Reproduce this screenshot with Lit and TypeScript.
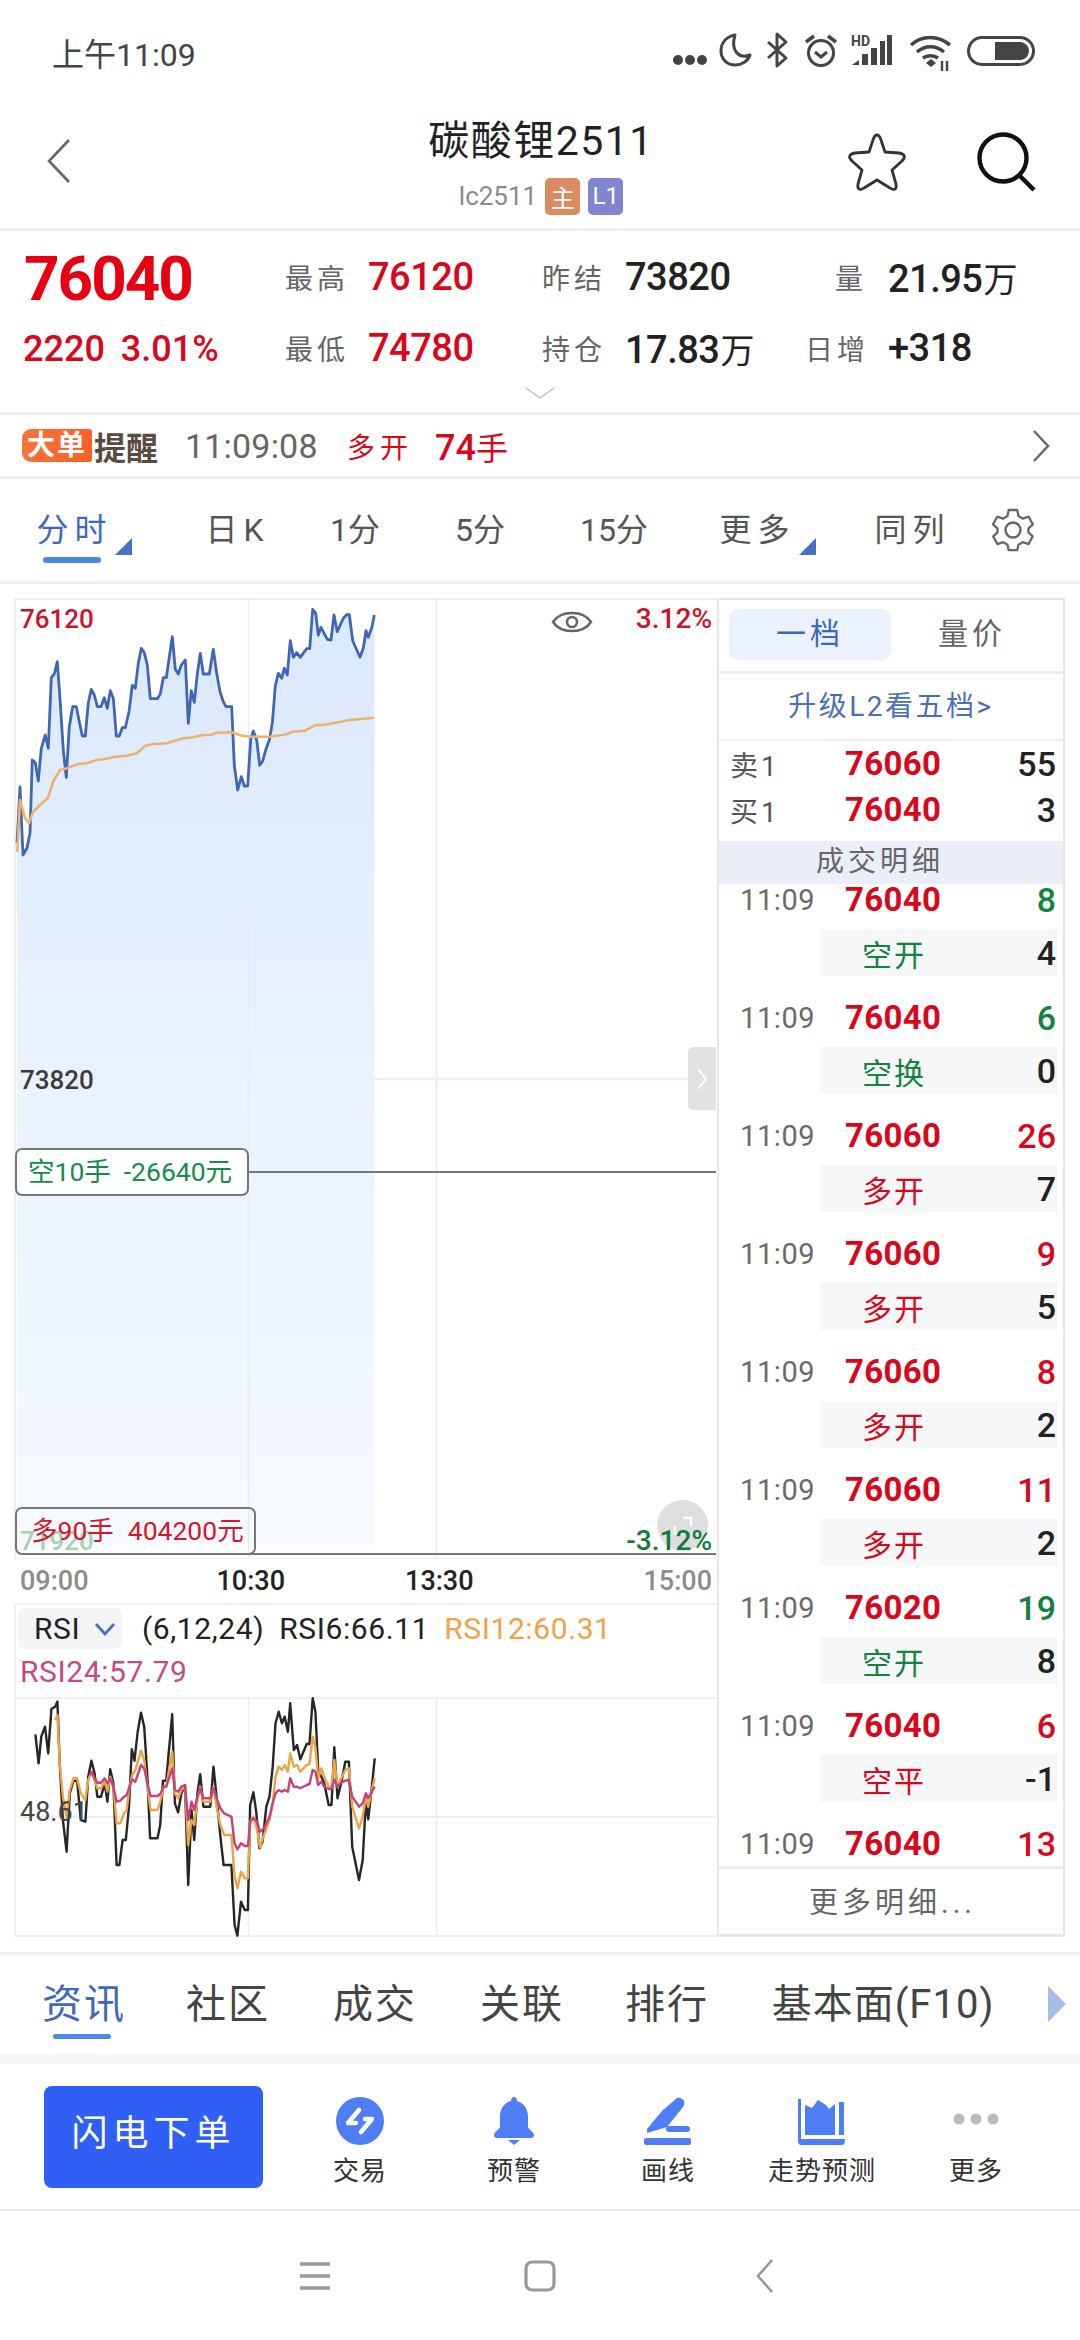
import { LitElement, html, css, svg } from "lit";
import { customElement } from "lit/decorators.js";

type P = [number, number];
const pts = (a: number[]): P[] => { const r: P[] = []; for (let i = 0; i < a.length; i += 2) r.push([a[i], a[i + 1]]); return r; };
// price curves: traced in 3x crop coordinates (origin 0,580)
const toMain = (p: P[]) => p.map(([x, y]) => `${(x / 3).toFixed(1)},${(580 + y / 3).toFixed(1)}`).join(" ");
// rsi curves: traced with x*2.178, y*3 (origin 0,1590)
const toRsi = (p: P[]) => p.map(([x, y]) => `${(x / 2.178).toFixed(1)},${(1590 + y / 3).toFixed(1)}`).join(" ");

const BLUE = pts([51,789,60,621,69,825,81,804,90,759,97,540,106,548,115,603,124,505,136,465,145,505,154,293,163,282,172,245,181,370,190,510,199,592,208,440,218,380,229,380,238,425,247,468,256,468,265,368,274,328,283,345,292,380,303,380,313,353,322,385,331,332,340,355,349,468,358,468,367,443,376,443,387,395,397,316,406,325,415,250,424,205,433,218,442,255,451,356,472,356,481,342,490,293,499,293,517,170,526,268,535,282,544,255,556,240,565,430,574,332,583,367,592,282,601,220,610,282,628,282,640,208,650,280,660,335,670,365,678,380,695,380,703,555,713,630,724,590,733,618,743,618,752,478,760,453,770,480,779,556,788,543,797,510,808,480,817,430,826,318,835,280,845,295,853,265,862,285,871,182,880,232,890,218,901,232,920,206,929,206,938,88,947,100,955,165,963,142,982,178,993,180,1002,105,1012,155,1030,115,1040,104,1048,104,1058,182,1080,232,1090,205,1098,152,1105,172,1116,140,1123,105]);
const AVG = pts([52,816,60,660,75,714,87,729,99,696,120,675,144,654,159,606,180,570,200,565,235,552,260,550,290,540,320,536,345,530,380,527,410,520,435,498,455,493,500,490,550,475,580,472,610,465,635,464,650,458,695,457,720,466,750,470,810,470,860,463,875,456,915,452,945,436,975,434,1050,420,1123,413]);
const R6 = pts([77,433,84,520,90,440,98,410,105,490,112,357,120,350,125,335,130,520,137,690,145,785,152,610,160,572,168,572,176,690,186,695,192,560,199,512,206,550,212,620,220,620,228,580,234,635,240,538,247,580,254,825,260,825,267,750,274,750,281,650,287,478,293,512,300,425,307,368,314,410,321,560,327,745,343,745,349,705,355,572,362,572,375,373,381,640,388,667,395,610,403,585,410,885,417,660,423,750,430,610,436,553,443,650,458,650,465,530,473,640,480,740,487,825,504,825,511,1005,517,1037,525,935,533,960,540,960,545,645,552,607,558,665,565,775,572,755,580,650,587,620,594,530,600,400,607,365,614,400,620,380,627,425,632,340,640,480,647,465,654,508,668,462,674,462,681,325,687,365,693,540,700,560,706,580,716,645,722,645,728,472,735,625,743,580,752,515,760,515,767,770,782,870,790,810,797,630,802,688,810,590,816,505]);
const R12 = pts([120,390,125,375,130,520,137,620,145,680,152,600,160,565,168,565,176,610,186,630,192,570,199,548,206,570,212,595,220,595,228,575,234,605,240,560,247,590,254,700,262,700,270,670,276,660,282,590,288,555,295,540,307,482,314,510,321,590,328,660,343,660,350,630,356,590,362,590,375,485,381,610,388,625,395,600,403,590,410,765,417,690,423,705,430,630,436,590,443,635,458,635,465,590,473,660,480,705,488,735,504,735,511,860,517,895,525,845,533,865,540,865,545,695,552,680,560,720,566,772,575,735,587,690,594,640,600,560,607,530,614,540,620,525,627,545,632,490,640,530,647,525,654,545,668,525,674,522,681,440,687,470,693,565,700,535,706,560,716,590,722,590,728,510,735,590,743,565,752,540,760,535,767,650,782,715,790,680,797,620,802,650,810,600,816,565]);
const R24 = pts([195,555,200,545,206,565,212,578,220,578,228,565,234,580,240,565,247,590,254,635,262,632,270,620,276,615,282,590,288,568,295,575,307,525,314,535,321,580,328,618,343,618,350,610,356,590,362,590,375,535,381,600,388,605,395,590,403,585,410,690,417,635,423,660,430,620,436,595,443,625,458,625,465,595,473,630,480,655,488,670,504,680,511,760,517,778,525,760,533,768,540,768,545,695,552,685,560,695,566,725,575,715,587,680,594,640,600,610,607,600,614,605,620,600,627,605,632,565,640,590,647,590,654,595,668,585,674,582,681,540,687,545,693,585,700,575,706,590,716,597,722,597,728,570,735,590,743,578,752,572,760,570,767,620,782,650,790,640,797,610,802,625,810,605,816,590]);

type Row = { price: string; qty: string; qc: string; kind?: string; kc?: string; sub?: string };
const ROWS: Row[] = [
  { price: "76040", qty: "8", qc: "g", kind: "空开", kc: "g", sub: "4" },
  { price: "76040", qty: "6", qc: "g", kind: "空换", kc: "g", sub: "0" },
  { price: "76060", qty: "26", qc: "r", kind: "多开", kc: "r", sub: "7" },
  { price: "76060", qty: "9", qc: "r", kind: "多开", kc: "r", sub: "5" },
  { price: "76060", qty: "8", qc: "r", kind: "多开", kc: "r", sub: "2" },
  { price: "76060", qty: "11", qc: "r", kind: "多开", kc: "r", sub: "2" },
  { price: "76020", qty: "19", qc: "g", kind: "空开", kc: "g", sub: "8" },
  { price: "76040", qty: "6", qc: "r", kind: "空平", kc: "r", sub: "-1" },
  { price: "76040", qty: "13", qc: "r" },
];

@customElement("app-root")
export class AppRoot extends LitElement {
  static styles = css`
    :host { display: block; width: 1080px; height: 2340px; background: #fff; overflow: hidden; color: #222;
      font-family: Roboto, "Noto Sans CJK SC", sans-serif; }
    * { box-sizing: border-box; }
    svg { display: block; }
    .r { color: #d9071c; } .g { color: #12823e; }

    .status { height: 104px; display: flex; align-items: center; justify-content: space-between; padding: 0 45px 0 52px; }
    .clock { font-size: 32px; color: #444; }
    .sicons { display: flex; align-items: center; height: 104px; }
    .s1 { margin-top: 16px; }
    .s2 { margin: -4px 0 0 11px; }
    .s3 { margin: -4px 0 0 14px; }
    .s4 { margin: -2px 0 0 16px; }
    .s5 { margin: -4px 0 0 13px; }
    .s6 { margin: 2px 0 0 16px; }
    .s7 { margin: -2px 0 0 14px; }

    .head { height: 127px; border-bottom: 3px solid #eee; display: flex; align-items: flex-start; padding: 0 44px 0 46px; }
    .head .side { flex: 1; display: flex; gap: 69px; }
    .head .back { padding-top: 34px; }
    .head .right { justify-content: flex-end; padding-top: 28px; }
    .title { display: flex; flex-direction: column; align-items: center; padding-top: 9px; }
    .title h1 { margin: 0; font-size: 41px; font-weight: 400; line-height: 56px; letter-spacing: 1.5px; color: #222; }
    .subt { display: flex; align-items: center; gap: 8px; font-size: 26px; color: #8a8a8a; height: 38px; margin-top: 8px; }
    .bdg { width: 35px; height: 37px; border-radius: 5px; color: #fff; font-size: 24px; display: flex; align-items: center; justify-content: center; }
    .bdg.a { background: #dc8a60; } .bdg.b { background: #7f86cf; }

    .quote { border-bottom: 3px solid #eee; height: 184px; padding: 23px 0 0 24px; display: flex; position: relative; }
    .big { width: 261px; }
    .big .p { font-size: 62px; font-weight: 700; letter-spacing: -2px; line-height: 50px; height: 54px; color: #e60012; }
    .big .c { font-size: 36px; font-weight: 500; color: #d9071c; margin: 19px 0 0 -1px; display: flex; gap: 16px; line-height: 44px; }
    .stats { flex: 1; display: grid; grid-template-columns: 257px 263px 1fr; grid-auto-rows: 46px; row-gap: 25px; }
    .stat { display: flex; align-items: center; gap: 21px; }
    .stat label { font-size: 28px; letter-spacing: 4px; color: #666; width: 62px; white-space: nowrap; }
    .stat.t label { text-align: right; }
    .stat b { font-size: 38px; font-weight: 500; letter-spacing: -.5px; }
    .stat i { font-style: normal; font-size: 34px; margin-left: 1px; font-weight: 400; }
    .down { position: absolute; left: 525px; top: 156px; }

    .alert { height: 64px; border-bottom: 3px solid #eee; display: flex; align-items: center; padding: 0 30px 0 22px; }
    .logo { display: flex; align-items: center; gap: 2px; width: 163px; }
    .logo .o { width: 70px; height: 33px; background: linear-gradient(90deg, #f9733a, #f9602a); border-radius: 9px 3px 3px 9px; color: #fff; font-weight: 700; font-size: 28px; line-height: 33px; text-align: center; letter-spacing: 2px; }
    .logo .d { color: #5b4b3f; font-size: 32px; font-weight: 700; white-space: nowrap; }
    .alert .tm { font-size: 34px; color: #666; width: 162px; letter-spacing: .2px; }
    .alert .k { font-size: 28px; letter-spacing: 5px; color: #d9071c; width: 88px; }
    .alert .n { font-size: 36px; font-weight: 500; color: #d9071c; }
    .alert .n span { font-size: 32px; font-weight: 400; }
    .alert svg { margin-left: auto; }

    .tabs { height: 105px; border-bottom: 3px solid #eee; display: grid; align-items: center;
      grid-template-columns: 144px 182px 58px 192px 76px 206px 104px 102px; font-size: 32px; color: #555; text-align: center; }
    .tabs > div { position: relative; height: 102px; line-height: 102px; white-space: nowrap; }
    .tabs .sp { letter-spacing: 6px; padding-left: 5px; }
    .tabs .on { color: #3f69b8; }
    .bar { position: absolute; height: 6px; width: 58px; left: 43px; top: 78px; border-radius: 3px; background: #4f86e0; }
    .tri { position: absolute; width: 17px; height: 17px; top: 59px; background: #4a70c8; clip-path: polygon(100% 0, 100% 100%, 0 100%); }
    .tri.a { left: 115px; } .tri.b { left: 147px; }
    .tabs .gear { display: flex; align-items: center; justify-content: center; }

    .body { display: flex; padding: 14px 15px 0 14px; }
    .chart { width: 703px; height: 1339px; }
    .main { position: relative; height: 961px; box-shadow: inset 2px 2px 0 #eee; }
    .main svg.plot { position: absolute; inset: 0; }
    .lb { position: absolute; font-size: 26px; line-height: 28px; font-weight: 500; }
    .lb.pct { font-size: 28px; }
    .lb.dk { color: #3b3b3b; } .lb.rd { color: #c9142a; } .lb.gn { color: #12793c; }
    .lb.pale { color: #a4d2b3; }
    .lb.tl { left: 6px; } .lb.tr { right: 5px; }
    .lb.y0 { top: 7px; } .lb.y1 { top: 468px; } .lb.y2 { top: 929px; }
    .eye { position: absolute; left: 537px; top: 9px; }
    .handle { position: absolute; left: 674px; top: 449px; width: 28px; height: 63px; background: #e2e2e2; border-radius: 5px 0 0 5px; display: flex; align-items: center; justify-content: center; }
    .fs { position: absolute; left: 643px; top: 902px; width: 51px; height: 51px; border-radius: 50%; background: #dedede; display: flex; align-items: center; justify-content: center; }
    .tag { position: absolute; left: 1px; height: 48px; border: 2px solid #777; border-radius: 7px; font-size: 26.5px; line-height: 44px; padding-left: 11px; display: flex; gap: 13px; white-space: nowrap; }
    .tag.s { top: 550px; width: 234px; background: rgba(255,255,255,.9); color: #1a8a4a; }
    .tag.l { top: 909px; width: 241px; color: #d3182c; gap: 14px; padding-left: 14px; }
    .axis { height: 44px; display: flex; align-items: center; padding: 0 5px 0 6px; font-size: 27px; font-weight: 500; color: #222; }
    .axis .m { color: #8c8c8c; }
    .axis .a1 { margin-left: 128px; } .axis .a2 { margin-left: 120px; } .axis .a3 { margin-left: auto; }
    .rhead { height: 94px; box-shadow: inset 2px 2px 0 #f0f0f0; padding: 5px 0 0 4px; font-size: 30px; letter-spacing: .6px; font-weight: 400; }
    .rline { display: flex; align-items: center; height: 41px; white-space: nowrap; }
    .pill { width: 104px; height: 41px; background: #f3f4f6; border-radius: 7px; display: flex; align-items: center; gap: 14px; padding-left: 16px; margin-right: 20px; }
    .rhead .o { color: #eea34a; margin-left: 15px; } .rhead .v { color: #c34b86; margin-left: 2px; }
    .rhead .x { margin-left: 15px; }
    .rline.two { height: 42px; margin-top: 1px; }
    .rplot { position: relative; height: 240px; box-shadow: inset 2px 2px 0 #eef0f5, inset 0 -2px 0 #eef0f5; }
    .rplot svg { position: absolute; inset: 0; }
    .rplot .lb { left: 6px; top: 101px; font-size: 27px; font-weight: 400; color: #444; }

    .panel { width: 348px; height: 1339px; border: 2px solid #e6e6e6; border-bottom-width: 3px; display: flex; flex-direction: column; }
    .ptabs { height: 74px; border-bottom: 3px solid #eee; flex: none; display: flex; padding: 9px 0 0 10px; font-size: 30px; letter-spacing: 4px; color: #666; }
    .ptabs div { width: 162px; height: 51px; line-height: 50px; text-align: center; border-radius: 9px; }
    .ptabs .on { background: #ebf1fd; color: #3f69b8; }
    .up { height: 67px; flex: none; border-bottom: 2px solid #f0f0f0; text-align: center; line-height: 66px; font-size: 28px; letter-spacing: 2.5px; color: #4a6fb5; }
    .ob { height: 100px; flex: none; }
    .ob .row { height: 46px; display: flex; align-items: center; padding: 0 7px 0 11px; }
    .ob label { width: 115px; font-size: 28px; color: #555; letter-spacing: 3px; }
    .num { font-size: 33px; line-height: 32px; font-weight: 700; width: 93px; color: #d9071c; letter-spacing: .3px; }
    .qty { flex: 1; text-align: right; font-size: 34px; line-height: 32px; font-weight: 500; }
    .dh { height: 43px; flex: none; background: #e9eef8; text-align: center; line-height: 42px; font-size: 28px; letter-spacing: 4px; color: #666; padding-right: 22px; }
    .list { flex: 1; overflow: hidden; }
    .tr { height: 118px; }
    .l1 { height: 32px; line-height: 32px; display: flex; align-items: center; padding: 0 7px 0 21px; }
    .l1 .tm { width: 105px; font-size: 29px; color: #6a6a6a; letter-spacing: .6px; }
    .l2 { margin: 13px 6px 0 101px; height: 47px; background: #f5f7f9; display: flex; align-items: center; padding: 0 1px 0 42px; }
    .l2 .kd { font-size: 30px; letter-spacing: 2px; }
    .more { height: 68px; flex: none; border-top: 3px solid #eee; text-align: center; line-height: 68px; font-size: 29px; letter-spacing: 4px; color: #666; padding-left: 3px; }

    .info { margin-top: 15px; height: 102px; border-top: 3px solid #eee; display: grid; grid-template-columns: 168px 120px 174px 120px 170px 262px 66px; font-size: 40px; color: #444; text-align: center; line-height: 99px; letter-spacing: 2px; white-space: nowrap; }
    .info > div { position: relative; height: 99px; }
    .info .on { color: #3f69b8; }
    .info .f10 { letter-spacing: 1px; }
    .info .bar { left: 53px; top: 79px; height: 5px; }
    .info .tr2 { position: absolute; left: 34px; top: 31px; width: 18px; height: 36px; background: #a8bce8; clip-path: polygon(0 0, 100% 50%, 0 100%); }
    .gapline { height: 10px; background: #f6f6f6; }
    .tool { height: 147px; border-bottom: 2px solid #e6e6e6; display: flex; padding: 22px 0 0 44px; }
    .flash { width: 219px; height: 102px; background: #2f5ff5; border-radius: 8px; color: #fff; font-size: 36px; letter-spacing: 5px; text-align: center; line-height: 96px; margin-right: 20px; flex: none; }
    .ti { width: 154px; display: flex; flex-direction: column; align-items: center; padding-top: 11px; font-size: 26px; letter-spacing: 1px; color: #333; white-space: nowrap; }
    .ti svg { margin-bottom: 5px; }
    .nav { height: 129px; display: flex; justify-content: center; align-items: center; }
    .nav div { width: 225px; display: flex; justify-content: center; }
  `;

  private statusIcons() {
    const c = "#444";
    return html`<div class="sicons">
      <svg class="s1" width="36" height="12" viewBox="0 0 36 12"><circle cx="6" cy="6" r="5" fill="${c}"/><circle cx="18" cy="6" r="5" fill="${c}"/><circle cx="30" cy="6" r="5" fill="${c}"/></svg>
      <svg class="s2" width="33" height="34" viewBox="0 0 33 34"><path d="M16 2 C6 4 2 11 2 18 C2 27 9 32 16 32 C23 32 29 28 31 22 C21 26 11 19 16 2 Z" fill="none" stroke="${c}" stroke-width="3" stroke-linejoin="round"/></svg>
      <svg class="s3" width="22" height="36" viewBox="0 0 22 36"><path d="M2 10 L20 26 L11 34 V2 L20 10 L2 26" fill="none" stroke="${c}" stroke-width="3" stroke-linejoin="round"/></svg>
      <svg class="s4" width="34" height="36" viewBox="0 0 34 36"><circle cx="17" cy="20" r="12.5" fill="none" stroke="${c}" stroke-width="3"/><path d="M11 19 L17 24 L23 19" fill="none" stroke="${c}" stroke-width="3"/><path d="M2 9 L10 3 M32 9 L24 3" stroke="${c}" stroke-width="3.5"/></svg>
      <svg class="s5" width="42" height="32" viewBox="0 0 42 32"><text x="0" y="12" font-family="Roboto" font-size="14" font-weight="700" fill="${c}">HD</text><path d="M1 31 L8 26 V31 Z" fill="${c}"/><rect x="11" y="20" width="6" height="11" fill="${c}"/><rect x="20" y="14" width="6" height="17" fill="${c}"/><rect x="29" y="7" width="5" height="24" fill="${c}" /><rect x="36" y="1" width="5" height="30" fill="${c}"/></svg>
      <svg class="s6" width="44" height="36" viewBox="0 0 44 36"><path d="M2 10 C13 0 29 0 41 10 M8 17 C16 10 27 10 35 17 M14 23 C18 20 25 20 29 23" fill="none" stroke="${c}" stroke-width="3.6"/><path d="M17 28 L22 24 L27 28 L22 32 Z" fill="${c}"/><path d="M33 36 V26 M38 36 V26" stroke="${c}" stroke-width="2.4"/></svg>
      <svg class="s7" width="68" height="30" viewBox="0 0 68 30"><rect x="1.5" y="1.5" width="65" height="27" rx="13.5" fill="none" stroke="${c}" stroke-width="3"/><path d="M28 6 H54 A9 9 0 0 1 62 15 A9 9 0 0 1 54 24 H28 Z" fill="${c}"/></svg>
    </div>`;
  }

  private mainSvg() {
    const area = `${toMain(BLUE)} 374.3,1545 17,1545`;
    return html`<svg class="plot" width="703" height="961" viewBox="14 598 703 961">
      <defs><linearGradient id="fill" x1="0" y1="0" x2="0" y2="1"><stop offset="0" stop-color="#dbe9fd"/><stop offset=".5" stop-color="#e9f2fe"/><stop offset="1" stop-color="#f6faff"/></linearGradient></defs>
      ${svg`<polygon points="${area}" fill="url(#fill)"/>`}
      <path d="M248.5 598 V1559 M436.5 598 V1559" stroke="#e8ecf4" stroke-width="1.5"/>
      <path d="M14 1079 H716" stroke="#eef0f6" stroke-width="2.5"/>
      <path d="M14 1559 H716" stroke="#eee" stroke-width="2"/>
      <path d="M249 1172 H716 M250 1554 H716" stroke="#777" stroke-width="2"/>
      <polyline points="${toMain(BLUE)}" fill="none" stroke="#4166b4" stroke-width="2.8" stroke-linejoin="round"/>
      <polyline points="${toMain(AVG)}" fill="none" stroke="#ecb36f" stroke-width="2.6" stroke-linejoin="round"/>
    </svg>`;
  }

  private rsiSvg() {
    return html`<svg width="703" height="240" viewBox="14 1697 703 240">
      <path d="M248.5 1697 V1937 M436.5 1697 V1937" stroke="#e8ecf4" stroke-width="1.5"/>
      <path d="M18 1817 H716" stroke="#eceef6" stroke-width="2"/>
      <polyline points="${toRsi(R6)}" fill="none" stroke="#262626" stroke-width="2.4" stroke-linejoin="round"/>
      <polyline points="${toRsi(R12)}" fill="none" stroke="#eda346" stroke-width="2.4" stroke-linejoin="round"/>
      <polyline points="${toRsi(R24)}" fill="none" stroke="#c4437f" stroke-width="2.4" stroke-linejoin="round"/>
    </svg>`;
  }

  render() {
    const B = "#4f7df5";
    return html`
      <div class="status"><span class="clock">上午11:09</span>${this.statusIcons()}</div>

      <div class="head">
        <div class="side back"><svg width="26" height="46" viewBox="0 0 26 46"><path d="M23 2 L3 23 L23 44" fill="none" stroke="#666" stroke-width="2.6"/></svg></div>
        <div class="title">
          <h1>碳酸锂2511</h1>
          <div class="subt"><span>lc2511</span><span class="bdg a">主</span><span class="bdg b">L1</span></div>
        </div>
        <div class="side right">
          <svg width="60" height="60" viewBox="0 0 60 60"><path d="M30 3 C32 3 33 5 34 8 L38 20 L52 21 C58 22 59 25 55 29 L45 38 L49 52 C50 57 47 59 43 56 L30 48 L17 56 C13 59 10 57 11 52 L15 38 L5 29 C1 25 2 22 8 21 L22 20 L26 8 C27 5 28 3 30 3 Z" fill="none" stroke="#333" stroke-width="2.8" stroke-linejoin="round"/></svg>
          <svg width="60" height="60" viewBox="0 0 60 60"><circle cx="27" cy="26" r="23.5" fill="none" stroke="#111" stroke-width="4.4"/><path d="M44 44 L58 58" stroke="#111" stroke-width="4.4"/></svg>
        </div>
      </div>

      <div class="quote">
        <div class="big"><div class="p">76040</div><div class="c"><span>2220</span><span>3.01%</span></div></div>
        <div class="stats">
          <div class="stat"><label>最高</label><b class="r">76120</b></div>
          <div class="stat"><label>昨结</label><b>73820</b></div>
          <div class="stat t"><label>量</label><b>21.95<i>万</i></b></div>
          <div class="stat"><label>最低</label><b class="r">74780</b></div>
          <div class="stat"><label>持仓</label><b>17.83<i>万</i></b></div>
          <div class="stat t"><label>日增</label><b>+318</b></div>
        </div>
        <svg class="down" width="30" height="12" viewBox="0 0 30 12"><path d="M1 1 L15 11 L29 1" fill="none" stroke="#c9c9c9" stroke-width="1.8"/></svg>
      </div>

      <div class="alert">
        <div class="logo"><span class="o">大单</span><span class="d">提醒</span></div>
        <span class="tm">11:09:08</span>
        <span class="k">多开</span>
        <span class="n">74<span>手</span></span>
        <svg width="18" height="32" viewBox="0 0 18 32"><path d="M2 1 L16 16 L2 31" fill="none" stroke="#666" stroke-width="2.4"/></svg>
      </div>

      <div class="tabs">
        <div class="on sp">分时<i class="bar"></i><i class="tri a"></i></div>
        <div class="sp">日K</div>
        <div>1分</div>
        <div>5分</div>
        <div>15分</div>
        <div class="sp">更多<i class="tri b"></i></div>
        <div class="sp">同列</div>
        <div class="gear"><svg width="42" height="44" viewBox="0 0 42 44"><path d="M16.5 2 H25.5 L26.8 8.2 L31.5 10.9 L37.5 8.9 L42 16.7 L37.3 20.9 V24.9 L41.8 29 L37.3 36.8 L31.3 34.9 L26.8 37.5 L25.5 43 H16.5 L15.2 37.5 L10.7 34.9 L4.7 36.8 L0.2 29 L4.7 24.9 V20.9 L0 16.7 L4.5 8.9 L10.5 10.9 L15.2 8.2 Z" transform="translate(1 0) scale(.95 .98)" fill="none" stroke="#666" stroke-width="2.4" stroke-linejoin="round"/><circle cx="21" cy="22" r="7.5" fill="none" stroke="#666" stroke-width="2.4"/></svg></div>
      </div>

      <div class="body">
        <div class="chart">
          <div class="main">
            ${this.mainSvg()}
            <span class="lb rd tl y0">76120</span>
            <span class="lb rd pct tr y0">3.12%</span>
            <span class="lb dk tl y1">73820</span>
            <span class="lb pale tl y2">71920</span>
            <div class="fs"><svg width="22" height="22" viewBox="0 0 22 22"><path d="M11 3 H19 V11 M3 11 V19 H11" fill="none" stroke="#fff" stroke-width="2.4"/></svg></div>
            <span class="lb gn pct tr y2">-3.12%</span>
            <svg class="eye" width="42" height="30" viewBox="0 0 42 30"><path d="M2 15 C10 3 32 3 40 15 C32 27 10 27 2 15 Z" fill="none" stroke="#666" stroke-width="2.6"/><circle cx="21" cy="15" r="5" fill="none" stroke="#666" stroke-width="2.6"/></svg>
            <div class="handle"><svg width="12" height="24" viewBox="0 0 12 24"><path d="M2 2 L10 12 L2 22" fill="none" stroke="#fff" stroke-width="2"/></svg></div>
            <div class="tag s"><span>空10手</span><span>-26640元</span></div>
            <div class="tag l"><span>多90手</span><span>404200元</span></div>
          </div>
          <div class="axis"><span class="m">09:00</span><span class="a1">10:30</span><span class="a2">13:30</span><span class="m a3">15:00</span></div>
          <div class="rhead">
            <div class="rline">
              <div class="pill"><span>RSI</span><svg width="22" height="14" viewBox="0 0 22 14"><path d="M2 2 L11 12 L20 2" fill="none" stroke="#4a70c8" stroke-width="2.8"/></svg></div>
              <span>(6,12,24)</span><span class="x">RSI6:66.11</span><span class="o">RSI12:60.31</span>
            </div>
            <div class="rline two"><span class="v">RSI24:57.79</span></div>
          </div>
          <div class="rplot">
            ${this.rsiSvg()}
            <span class="lb">48.61</span>
          </div>
        </div>

        <div class="panel">
          <div class="ptabs"><div class="on">一档</div><div>量价</div></div>
          <div class="up">升级L2看五档&gt;</div>
          <div class="ob">
            <div class="row"><label>卖1</label><span class="num">76060</span><span class="qty">55</span></div>
            <div class="row"><label>买1</label><span class="num">76040</span><span class="qty">3</span></div>
          </div>
          <div class="dh">成交明细</div>
          <div class="list">
            ${ROWS.map((x) => html`<div class="tr">
              <div class="l1"><span class="tm">11:09</span><span class="num">${x.price}</span><span class="qty ${x.qc}">${x.qty}</span></div>
              ${x.kind ? html`<div class="l2"><span class="kd ${x.kc}">${x.kind}</span><span class="qty">${x.sub}</span></div>` : ""}
            </div>`)}
          </div>
          <div class="more">更多明细...</div>
        </div>
      </div>

      <div class="info">
        <div class="on">资讯<i class="bar"></i></div>
        <div>社区</div><div>成交</div><div>关联</div><div>排行</div><div class="f10">基本面(F10)</div>
        <div><i class="tr2"></i></div>
      </div>
      <div class="gapline"></div>

      <div class="tool">
        <div class="flash">闪电下单</div>
        <div class="ti"><svg width="48" height="48" viewBox="0 0 48 48"><circle cx="24" cy="24" r="24" fill="${B}"/><path d="M23 13 L12 26 H20 M29 22 H36 L25 35" stroke="#fff" stroke-width="4.5" fill="none" stroke-linecap="round" stroke-linejoin="round"/></svg>交易</div>
        <div class="ti"><svg width="48" height="48" viewBox="0 0 48 48"><path d="M24 0 C26 0 27 2 27 4 C34 6 38 12 38 20 V30 C39 33 44 35 44 38 C44 40 43 41 41 41 H7 C5 41 4 40 4 38 C4 35 9 33 10 30 V20 C10 12 14 6 21 4 C21 2 22 0 24 0 Z" fill="${B}"/><path d="M18 43 H30 L24 48 Z" fill="${B}"/></svg>预警</div>
        <div class="ti"><svg width="48" height="48" viewBox="0 0 48 48"><path d="M33 1 C36 0 39 2 40 4 C41 6 40 8 39 10 L23 30 L3 36 L3 32 L18 14 Z" fill="${B}"/><rect x="22" y="29" width="24" height="6" rx="3" fill="${B}"/><rect x="0" y="41" width="47" height="7" rx="2" fill="${B}"/></svg>画线</div>
        <div class="ti"><svg width="48" height="48" viewBox="0 0 48 48"><path d="M0 2 H3 V42 H47 C47 46 46 48 44 48 H3 C1 48 0 46 0 44 Z" fill="${B}"/><path d="M7 8 L14 11 L20 3 L28 8 L31 12 L37 7 V38 H7 Z" fill="${B}"/><rect x="41" y="5" width="5" height="33" fill="${B}"/></svg>走势预测</div>
        <div class="ti"><svg width="48" height="48" viewBox="0 0 48 48"><circle cx="7" cy="22" r="5.5" fill="#bbb"/><circle cx="24" cy="22" r="5.5" fill="#bbb"/><circle cx="41" cy="22" r="5.5" fill="#bbb"/></svg>更多</div>
      </div>

      <div class="nav">
        <div><svg width="30" height="28" viewBox="0 0 30 28"><path d="M0 2 H30 M0 14 H30 M0 26 H30" stroke="#999" stroke-width="3.6"/></svg></div>
        <div><svg width="32" height="32" viewBox="0 0 32 32"><rect x="2" y="2" width="28" height="28" rx="6" fill="none" stroke="#999" stroke-width="3.2"/></svg></div>
        <div><svg width="18" height="34" viewBox="0 0 18 34"><path d="M16 1 L2 17 L16 33" fill="none" stroke="#999" stroke-width="2.6"/></svg></div>
      </div>
    `;
  }
}
